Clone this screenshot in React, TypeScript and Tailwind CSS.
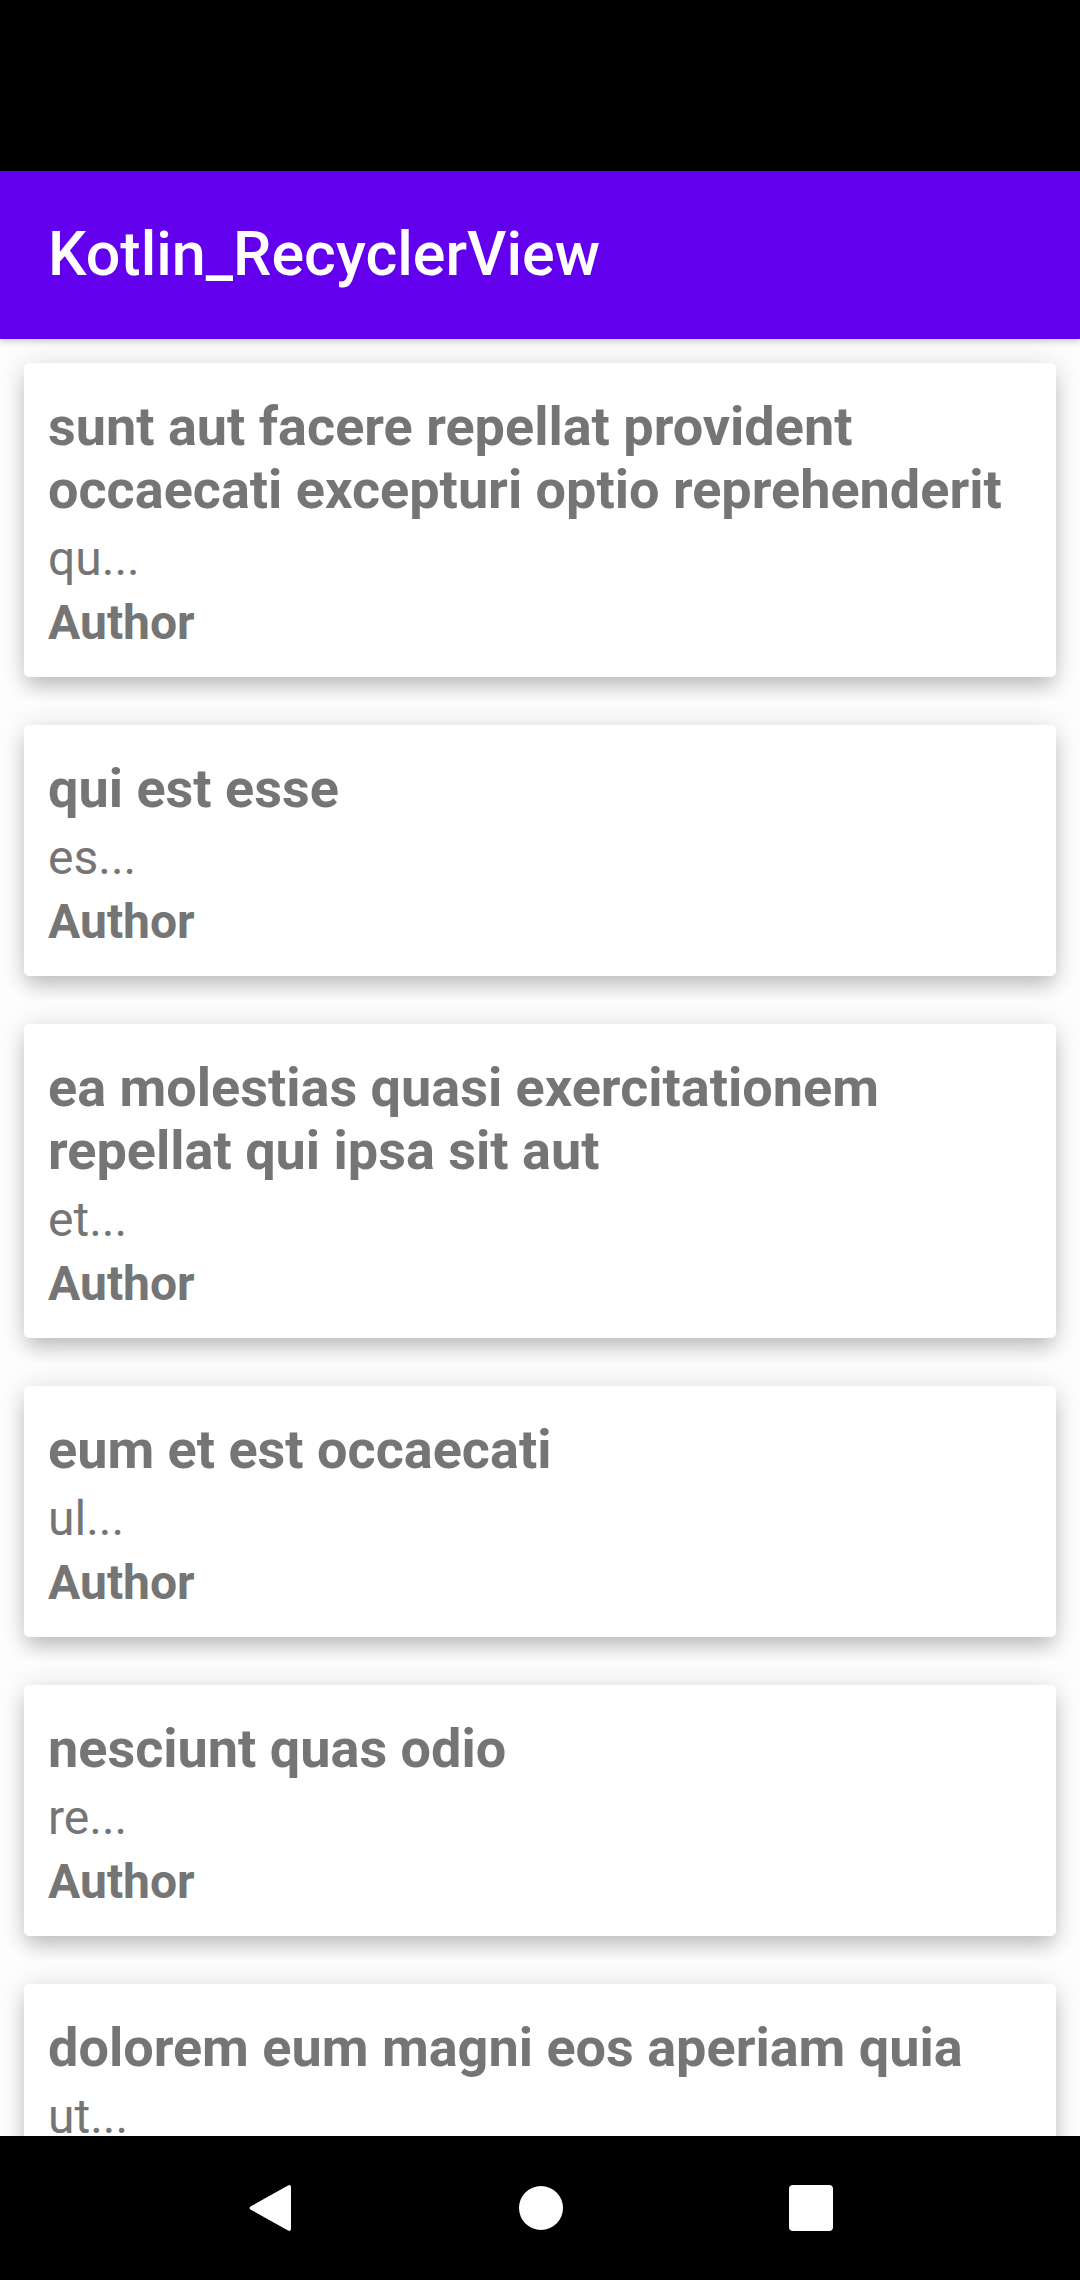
import React from 'react';

interface Post {
  title: string;
  body: string;
}

const posts: Post[] = [
  { title: 'sunt aut facere repellat provident occaecati excepturi optio reprehenderit', body: 'qu...' },
  { title: 'qui est esse', body: 'es...' },
  { title: 'ea molestias quasi exercitationem repellat qui ipsa sit aut', body: 'et...' },
  { title: 'eum et est occaecati', body: 'ul...' },
  { title: 'nesciunt quas odio', body: 're...' },
  { title: 'dolorem eum magni eos aperiam quia', body: 'ut...' },
  { title: 'magnam facilis autem', body: 'do...' },
];

const PostCard: React.FC<{ post: Post }> = ({ post }) => (
  // each row clips its own card shadow, like the recycler item bounds
  <div className="overflow-hidden px-[24px] py-[24px]">
    <div className="rounded-[5px] bg-white px-[24px] py-[24px] shadow-[0_12px_20px_-2px_rgba(0,0,0,0.2),0_0_28px_rgba(0,0,0,0.11)]">
      <p className="pt-[8px] pb-[3px] text-[54px] leading-[63px] font-bold text-[#757575]">{post.title}</p>
      <p className="pt-[6px] pb-[2px] text-[48px] leading-[57px] text-[#757575]">{post.body}</p>
      <p className="pt-[6px] pb-[2px] text-[48px] leading-[56px] font-bold text-[#757575]">Author</p>
    </div>
  </div>
);

const NavBar: React.FC = () => (
  <div className="flex h-[144px] shrink-0 items-center justify-center bg-black">
    <div className="flex w-[586px] items-center justify-between">
      {/* back */}
      <svg width="46" height="50" viewBox="0 0 46 50">
        <path d="M41 2.5 Q44 1 44 4.5 L44 45.5 Q44 49 41 47.5 L3.5 26.5 Q1.5 25 3.5 23.5 Z" fill="white" />
      </svg>
      {/* home */}
      <div className="h-[44px] w-[44px] rounded-full bg-white" />
      {/* recents */}
      <div className="h-[46px] w-[44px] rounded-[4px] bg-white" />
    </div>
  </div>
);

export default function App() {
  return (
    <div className="flex h-[2280px] w-[1080px] flex-col overflow-hidden bg-white font-['Roboto','Liberation_Sans',sans-serif]">
      <div className="h-[171px] shrink-0 bg-black" />
      <div className="relative z-10 flex h-[168px] shrink-0 items-center bg-[#6200ee] pl-[48px] shadow-[0_3px_6px_rgba(0,0,0,0.18)]">
        <h1 className="text-[61px] font-medium text-white">Kotlin_RecyclerView</h1>
      </div>
      <div className="min-h-0 flex-1 overflow-hidden bg-[#fdfdfd]">
        {posts.map((p, i) => (
          <PostCard key={i} post={p} />
        ))}
      </div>
      <NavBar />
    </div>
  );
}
